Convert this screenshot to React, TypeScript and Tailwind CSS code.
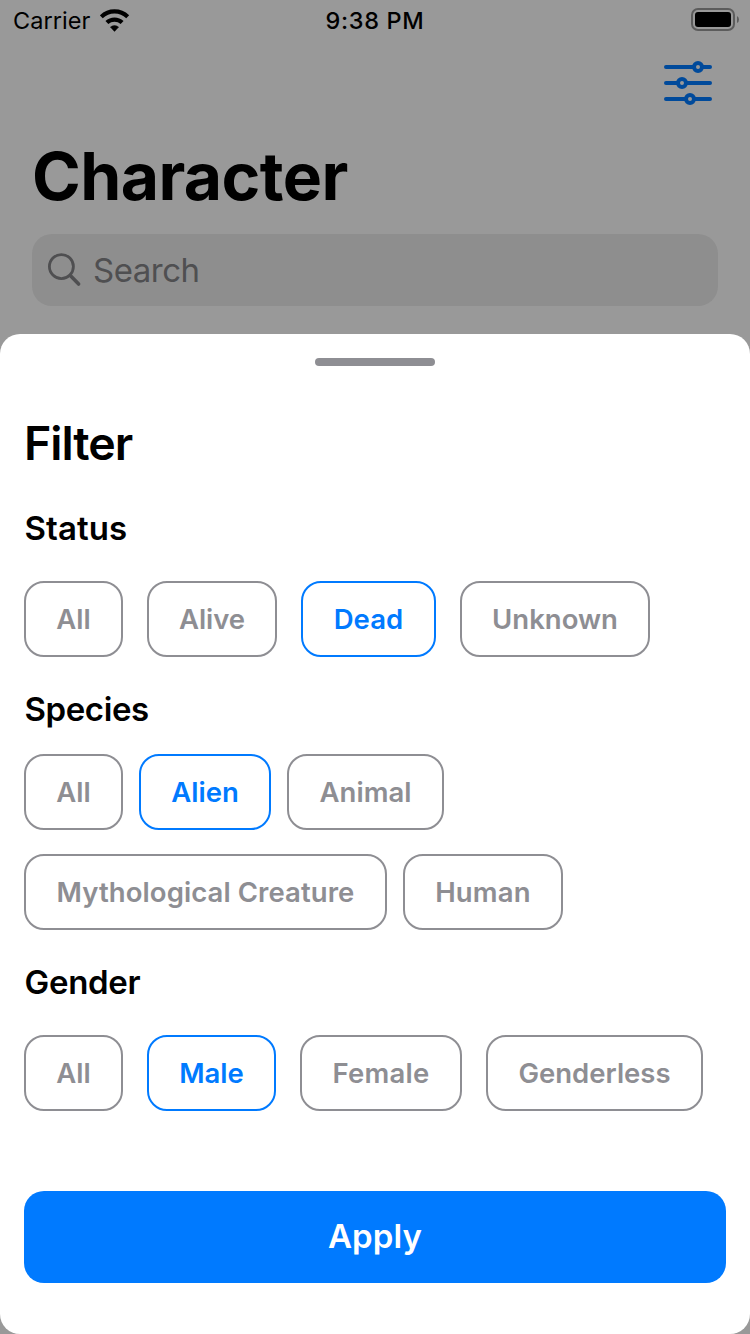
type ChipData = { label: string; box: string; text: string; selected?: boolean };

const status: ChipData[] = [
  { label: "All", box: "w-[99px]", text: "tracking-[0px]" },
  { label: "Alive", box: "w-[130px]", text: "tracking-[-0.1px]" },
  { label: "Dead", box: "w-[135px]", text: "tracking-[0.1px]", selected: true },
  { label: "Unknown", box: "w-[190px]", text: "tracking-[0px]" },
];

const species: ChipData[] = [
  { label: "All", box: "w-[99px]", text: "tracking-[0px]" },
  { label: "Alien", box: "w-[132px]", text: "tracking-[0px]", selected: true },
  { label: "Animal", box: "w-[157px]", text: "tracking-[0px]" },
  { label: "Mythological Creature", box: "w-[363px]", text: "tracking-[0.08px]" },
  { label: "Human", box: "w-[160px]", text: "tracking-[0.2px]" },
];

const gender: ChipData[] = [
  { label: "All", box: "w-[99px]", text: "tracking-[0px]" },
  { label: "Male", box: "w-[129px]", text: "tracking-[0px]", selected: true },
  { label: "Female", box: "w-[162px]", text: "tracking-[0.2px]" },
  { label: "Genderless", box: "w-[217px]", text: "tracking-[0px]" },
];

function Chip({ label, box, text, selected }: ChipData) {
  const color = selected ? "border-[#007aff] text-[#007aff]" : "border-[#8e8e93] text-[#8e8e93]";
  return (
    <button
      className={`flex h-[76px] shrink-0 items-center justify-center whitespace-nowrap rounded-[20px] border-2 pt-0.5 text-[27.5px] font-semibold ${box} ${color}`}
    >
      <span className={text}>{label}</span>
    </button>
  );
}

function StatusBar() {
  return (
    <div className="grid h-10 grid-cols-3 items-center pl-[13px] pr-[10px] text-[23.5px] leading-[38px]">
      <div className="flex items-center gap-[10px]">
        <span className="pt-0.5 tracking-[0.05px]">Carrier</span>
        <svg width="30" height="23" viewBox="0 0 30 23" fill="none" stroke="#000">
          <path d="M1.3 7.8 A19 19 0 0 1 27.7 7.8" strokeWidth="4.2" />
          <path d="M6.9 13.6 A11 11 0 0 1 22.1 13.6" strokeWidth="4.2" />
          <path d="M10.4 18.1 A6.2 6.2 0 0 1 18.6 18.1 L14.5 22.4 Z" fill="#000" stroke="#000" strokeWidth="0.5" />
        </svg>
      </div>
      <span className="pr-[3px] pt-0.5 text-center font-medium tracking-[0.65px]">9:38 PM</span>
      <svg className="justify-self-end" width="49" height="24" viewBox="0 0 49 24">
        <rect x="1" y="1" width="42" height="21" rx="6" fill="none" stroke="#5c5c5c" strokeWidth="2" />
        <rect x="4" y="4" width="36" height="15" rx="3" fill="#000" />
        <path d="M46 8 Q48 9 48 11.5 Q48 14 46 15 Z" fill="#5c5c5c" />
      </svg>
    </div>
  );
}

function Heading({ children, spacing }: { children: string; spacing: string }) {
  return <h3 className={`h-10 text-[33px] font-semibold leading-10 ${spacing}`}>{children}</h3>;
}

export default function App() {
  return (
    <div className="flex h-[1334px] w-[750px] flex-col overflow-hidden bg-[#999999] font-['Inter',sans-serif] text-black">
      <StatusBar />
      <div className="flex h-[88px] justify-end pr-[38px] pt-5">
        <svg width="48" height="46" viewBox="0 0 48 46" fill="none" stroke="#004a9b" strokeWidth="4" strokeLinecap="round">
          <path d="M2 7H28M40 7H46M2 23H12M24 23H46M2 39H20M32 39H46" />
          <path d="M28 7H30M38 7H40M12 23H14M22 23H24M20 39H22M30 39H32" />
          <circle cx="34" cy="7" r="4" />
          <circle cx="18" cy="23" r="4" />
          <circle cx="26" cy="39" r="4" />
        </svg>
      </div>
      <h1 className="h-[106px] pl-8 text-[66px] font-bold leading-[96px] tracking-[-0.6px]">Character</h1>
      <div className="mx-8 flex h-[72px] shrink-0 items-center rounded-[20px] bg-[#8e8e8e] pl-4 text-[#4f4f51]">
        <svg width="34" height="34" viewBox="0 0 34 34" fill="none" stroke="currentColor" strokeLinecap="round">
          <circle cx="13.4" cy="13.6" r="12" strokeWidth="2.8" />
          <path d="M22.3 22.6L30.6 31" strokeWidth="3.6" />
        </svg>
        <span className="ml-[11px] text-[33px] leading-[72px] tracking-[-0.5px]">Search</span>
      </div>

      <section className="mt-7 flex h-[1000px] shrink-0 flex-col rounded-[20px] bg-white px-6 pt-6">
        <div className="h-2 w-[120px] shrink-0 self-center rounded-full bg-[#8e8e93]" />
        <h2 className="mt-[49px] h-14 text-[46.5px] font-semibold leading-14 tracking-[-1px]">Filter</h2>
        <div className="mt-[37px]">
          <Heading spacing="pl-[0.5px] tracking-[0.1px]">Status</Heading>
          <div className="mt-[33px] flex gap-6">
            {status.map((c) => <Chip key={c.label} {...c} />)}
          </div>
        </div>
        <div className="mt-8">
          <Heading spacing="pl-[0.5px] tracking-[-0.4px]">Species</Heading>
          <div className="mt-[25px] flex flex-wrap gap-x-4 gap-y-6">
            {species.map((c) => <Chip key={c.label} {...c} />)}
          </div>
        </div>
        <div className="mt-8">
          <Heading spacing="pl-[0.5px] tracking-[-0.3px]">Gender</Heading>
          <div className="mt-[33px] flex gap-6">
            {gender.map((c) => <Chip key={c.label} {...c} />)}
          </div>
        </div>
        <button className="mt-20 h-[92px] shrink-0 rounded-[20px] bg-[#007aff] text-[33px] font-semibold tracking-[0.1px] text-white">
          <span>Apply</span>
        </button>
      </section>
    </div>
  );
}
